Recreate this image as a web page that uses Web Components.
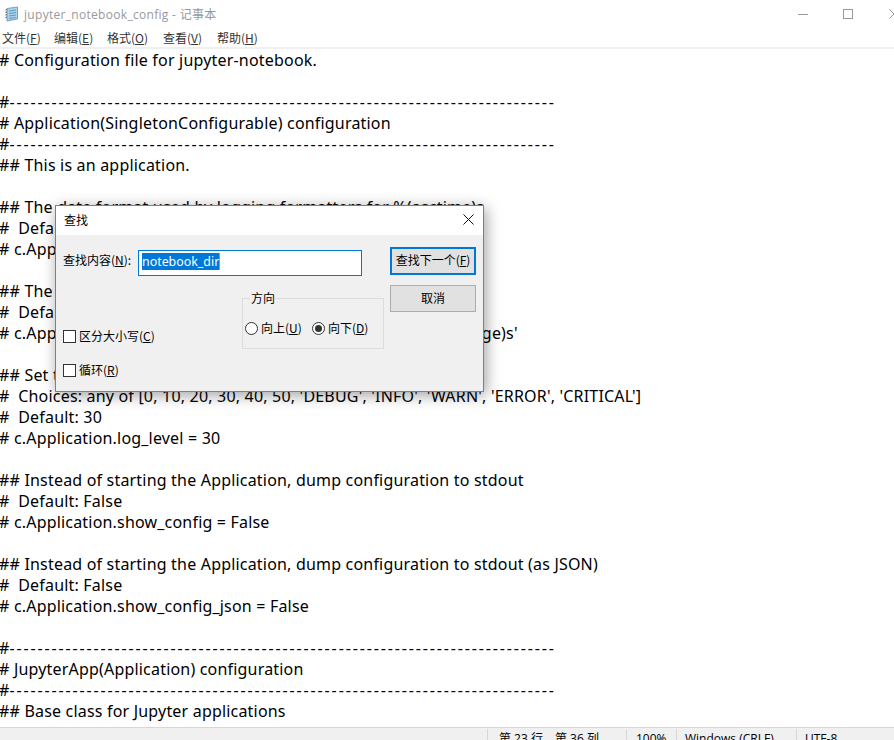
<!DOCTYPE html>
<html lang="zh"><head><meta charset="utf-8"><title>记事本</title>
<style>html,body{margin:0;height:740px;overflow:hidden;background:#fff}</style></head>
<body>
<np-window>
<np-titlebar>jupyter_notebook_config - 记事本</np-titlebar>
<np-menubar>
<np-menu w="52">文件(<u>F</u>)</np-menu><np-menu w="53">编辑(<u>E</u>)</np-menu><np-menu w="56">格式(<u>O</u>)</np-menu><np-menu w="54">查看(<u>V</u>)</np-menu><np-menu w="54">帮助(<u>H</u>)</np-menu>
</np-menubar>
<np-editor>
<np-line># Configuration file for jupyter-notebook.</np-line>
<np-line></np-line>
<np-line>#<np-dash>------------------------------------------------------------------------------</np-dash></np-line>
<np-line># Application(SingletonConfigurable) configuration</np-line>
<np-line>#<np-dash>------------------------------------------------------------------------------</np-dash></np-line>
<np-line>## This is an application.</np-line>
<np-line></np-line>
<np-line>## The date format used by logging formatters for %(asctime)s</np-line>
<np-line>#  Default: '%Y-%m-%d %H:%M:%S'</np-line>
<np-line># c.Application.log_datefmt = '%Y-%m-%d %H:%M:%S'</np-line>
<np-line></np-line>
<np-line>## The Logging format template</np-line>
<np-line>#  Default: '[%(name)s]%(highlevel)s %(message)s'</np-line>
<np-line># c.Application.log_format = '[%(name)s]%(highlevel)s %(message)s'</np-line>
<np-line></np-line>
<np-line>## Set the log level by value or name.</np-line>
<np-line>#  Choices: any of [0, 10, 20, 30, 40, 50, 'DEBUG', 'INFO', 'WARN', 'ERROR', 'CRITICAL']</np-line>
<np-line>#  Default: 30</np-line>
<np-line># c.Application.log_level = 30</np-line>
<np-line></np-line>
<np-line>## Instead of starting the Application, dump configuration to stdout</np-line>
<np-line>#  Default: False</np-line>
<np-line># c.Application.show_config = False</np-line>
<np-line></np-line>
<np-line>## Instead of starting the Application, dump configuration to stdout (as JSON)</np-line>
<np-line>#  Default: False</np-line>
<np-line># c.Application.show_config_json = False</np-line>
<np-line></np-line>
<np-line>#<np-dash>------------------------------------------------------------------------------</np-dash></np-line>
<np-line># JupyterApp(Application) configuration</np-line>
<np-line>#<np-dash>------------------------------------------------------------------------------</np-dash></np-line>
<np-line>## Base class for Jupyter applications</np-line>
</np-editor>
<np-statusbar></np-statusbar>
<np-find-dialog></np-find-dialog>
</np-window>
<script>
const CJK='"Noto Sans CJK SC","Noto Sans",sans-serif';
const LAT='"Open Sans","Noto Sans CJK SC",sans-serif';
function def(name,html,setup){
  customElements.define(name,class extends HTMLElement{
    constructor(){super();this.attachShadow({mode:'open'}).innerHTML=html;}
    connectedCallback(){if(setup)setup(this,this.shadowRoot);}
  });
}
def('np-window',`<style>:host{display:flex;flex-direction:column;position:relative;width:894px;height:750px;background:#fff;font-family:${CJK};font-size:12px;color:#000}</style><slot></slot>`);
def('np-titlebar',`<style>
:host{display:flex;align-items:center;box-sizing:border-box;height:29px;padding-bottom:1px;flex:none;color:#999;font-size:12px;letter-spacing:.3px}
.i{margin:0 4px;width:16px;height:16px;flex:none}
.t{flex:1;font-family:${LAT};white-space:nowrap}
.c{display:flex;flex:none;width:136px;height:28px;margin-right:-23px}
.c div{width:46px;display:flex;align-items:center;justify-content:center}
.c div:first-child{width:44px}
</style>
<svg class="i" viewBox="0 0 16 16"><path d="M3 2.500 13.500 1v12L3 15z" fill="#a9d3ee" stroke="#5f8fb0" stroke-width=".8"/><path d="M1.500 4 3 3.600M1.500 6.500 3 6.100M1.500 9 3 8.600M1.500 11.500 3 11.100" stroke="#555"/><path d="M5 5 12 4M5 7.500 12 6.500M5 10 12 9M5 12.500 12 11.500" stroke="#4d86ad" stroke-width=".8"/></svg>
<span class="t"><slot></slot></span>
<div class="c">
<div><svg width="10" height="10" viewBox="0 0 10 10"><path d="M0 5.500H10" stroke="#999"/></svg></div>
<div><svg width="10" height="10" viewBox="0 0 10 10"><rect x=".5" y=".5" width="9" height="9" fill="none" stroke="#999"/></svg></div>
<div><svg width="10" height="10" viewBox="0 0 10 10"><path d="M.5.500 9.500 9.500M9.500.500.500 9.500" stroke="#999"/></svg></div>
</div>`);
def('np-menubar',`<style>:host{display:flex;align-items:center;height:18px;flex:none;padding-left:2px;border-bottom:2px solid #f0f0f0}</style><slot></slot>`);
def('np-menu',`<style>:host{display:block;color:#333;white-space:nowrap;font-size:12px;line-height:18px}</style><slot></slot>`,h=>{h.style.width=h.getAttribute('w')+'px'});
def('np-editor',`<style>:host{display:block;flex:1;min-height:0;overflow:hidden;box-sizing:border-box;padding-top:1px;font:16px/21px "Noto Sans",sans-serif;letter-spacing:.19px;color:#000;margin-left:-1px}</style><slot></slot>`);
def('np-line',`<style>:host{display:block;height:21px;white-space:pre}</style><slot></slot>`);
def('np-dash',`<style>:host{display:inline;letter-spacing:1.85px}</style><slot></slot>`);
def('np-statusbar',`<style>
:host{display:flex;box-sizing:border-box;height:23px;flex:none;background:#f0f0f0;border-top:1px solid #d7d7d7;font-family:${LAT};font-size:12px;color:#000}
div{white-space:nowrap;border-left:1px solid #d7d7d7;line-height:21px;box-sizing:border-box;margin-top:1px}
div span{display:block;margin-top:-1px}
.e{width:487px;border:0}
</style>
<div class="e"></div>
<div style="width:139px;padding-left:11px"><span>第 23 行，第 36 列</span></div>
<div style="width:50px;padding-left:9px"><span>100%</span></div>
<div style="width:120px;padding-left:8px"><span>Windows (CRLF)</span></div>
<div style="width:98px;padding-left:8px"><span>UTF-8</span></div>`);
def('np-button',`<style>
:host{display:flex;align-items:center;justify-content:center;box-sizing:border-box;width:86px;height:27px;padding-bottom:2px;background:#e1e1e1;border:1px solid #adadad;font-size:12px;white-space:nowrap}
:host([primary]){height:28px;padding-bottom:3px;border:2px solid #0078d7}
</style><slot></slot>`);
def('np-check',`<style>
:host{display:flex;align-items:center;gap:3px;height:13px;white-space:nowrap;font-size:12px}
i{display:block;box-sizing:border-box;width:13px;height:13px;background:#fff;border:1px solid #333;flex:none}
span{padding-bottom:2px}
</style><i></i><span><slot></slot></span>`);
def('np-radio',`<style>
:host{display:flex;align-items:center;gap:3px;height:13px;white-space:nowrap;font-size:12px}
svg{flex:none}
span{padding-bottom:2px}
</style><svg width="13" height="13" viewBox="0 0 13 13"><circle cx="6.500" cy="6.500" r="6" fill="#fff" stroke="#333"/><circle class="dot" cx="6.500" cy="6.500" r="3.500" fill="#333"/></svg><span><slot></slot></span>`,(h,r)=>{const d=r.querySelector('.dot');if(d&&!h.hasAttribute('checked'))d.remove();});
def('np-find-dialog',`<style>
:host{position:absolute;left:55px;top:205px;width:429px;height:187px;box-sizing:border-box;display:flex;flex-direction:column;border:1px solid #7f7f7f;background:#f0f0f0;box-shadow:2px 3px 14px rgba(0,0,0,.38);font-size:12px;color:#000}
.title{display:flex;align-items:center;justify-content:space-between;box-sizing:border-box;height:29px;flex:none;background:#fff;padding:0 9px 2px 8px}
.title svg{flex:none}
.body{flex:1;display:flex;min-height:0}
.left{width:334px;box-sizing:border-box;padding:15px 0 0 7px;flex:none}
.find{display:flex;align-items:center}
.find label{width:75px;white-space:nowrap;flex:none;padding-bottom:8px}
.input{box-sizing:border-box;width:224px;height:26px;background:#fff;border:1px solid #0078d7;padding:2px 3px;flex:none}
.sel{display:inline-block;height:17px;background:#0078d7;color:#fff;border-right:1px solid #f08030;font:12.4px/17px "Noto Sans",sans-serif;white-space:nowrap;vertical-align:top}
.lower{display:flex;margin-top:22px}
.checks{width:179px;flex:none;padding-top:32px;display:flex;flex-direction:column;gap:21px;box-sizing:border-box}
.group{position:relative;box-sizing:border-box;width:142px;height:51px;border:1px solid #dcdcdc;padding:23px 0 0 2px;display:flex}
.legend{position:absolute;left:7px;top:-9px;padding:0 1px;background:#f0f0f0;line-height:16px}
.group np-radio:first-of-type{width:67px}
.right{flex:none;padding-top:12px;display:flex;flex-direction:column;gap:10px}
</style>
<div class="title"><span>查找</span><svg width="11" height="11" viewBox="0 0 11 11"><path d="M.5.500 10.500 10.500M10.500.500.500 10.500" stroke="#111"/></svg></div>
<div class="body">
<div class="left">
<div class="find"><label>查找内容(<u>N</u>):</label><div class="input"><span class="sel">notebook_dir</span></div></div>
<div class="lower">
<div class="checks"><np-check>区分大小写(<u>C</u>)</np-check><np-check>循环(<u>R</u>)</np-check></div>
<div class="group"><span class="legend">方向</span><np-radio>向上(<u>U</u>)</np-radio><np-radio checked>向下(<u>D</u>)</np-radio></div>
</div>
</div>
<div class="right"><np-button primary>查找下一个(<u>F</u>)</np-button><np-button>取消</np-button></div>
</div>`);
</script>
</body></html>
